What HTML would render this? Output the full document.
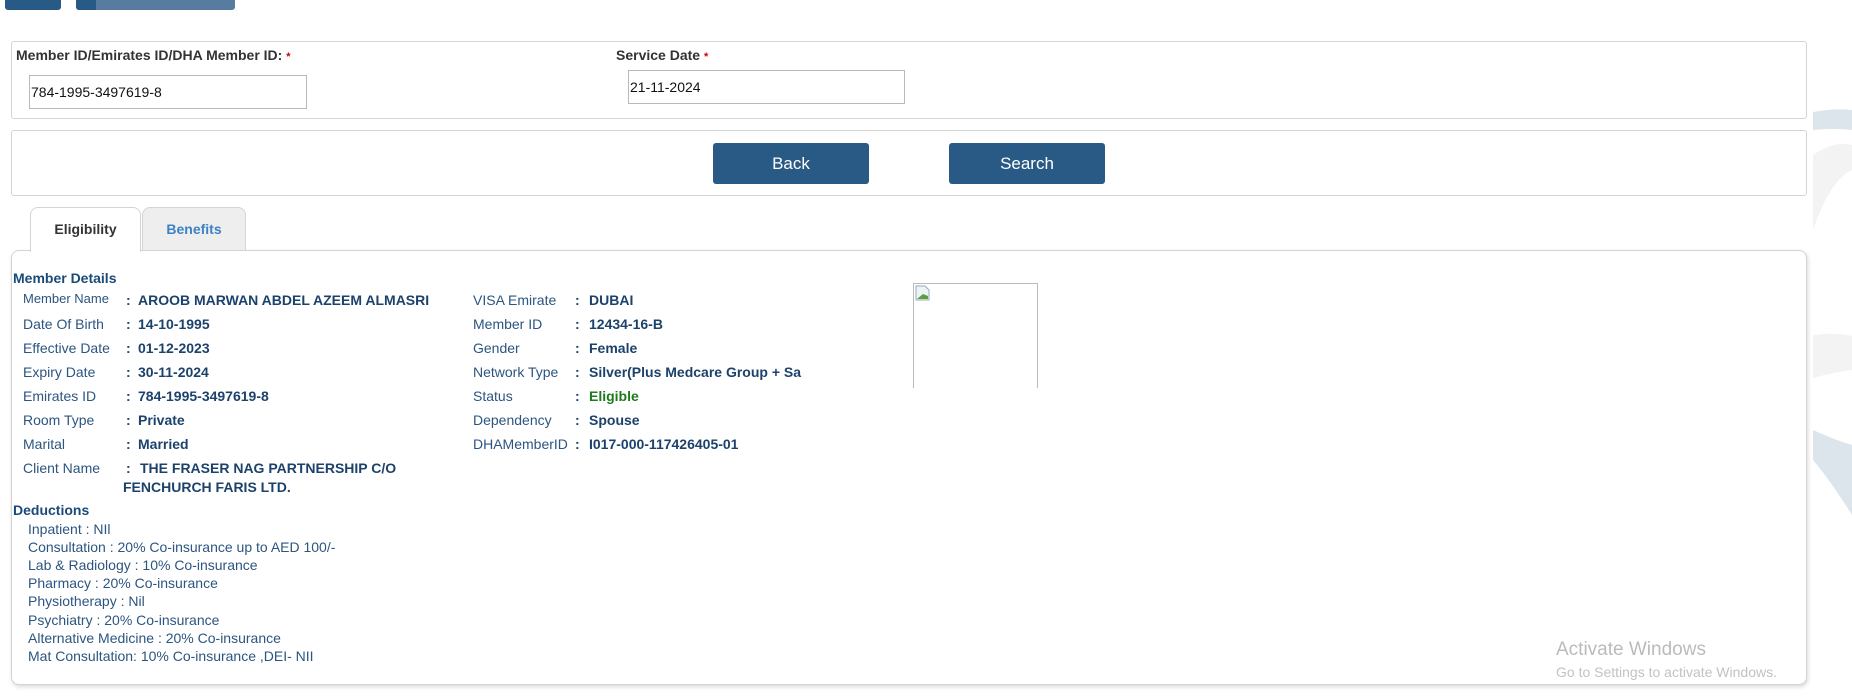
<!DOCTYPE html>
<html><head><meta charset="utf-8"><style>
*{margin:0;padding:0;box-sizing:border-box}
body{width:1852px;height:697px;background:#fff;position:relative;overflow:hidden;font-family:"Liberation Sans",Arial,sans-serif}
.a{position:absolute;white-space:nowrap;line-height:16px}
.panel{position:absolute;left:11px;width:1796px;border:1px solid #d4d4d4;border-radius:3px;background:#fff}
.lbl{font-size:14px;font-weight:bold;color:#333}
.req{color:#c00;font-size:11px}
.inp{position:absolute;border:1px solid #b9b9b9;font-size:14px;color:#111;line-height:32px;padding-left:1px;background:#fff}
.btn{position:absolute;background:#285a85;color:#fff;border-radius:3px;font-size:17px;text-align:center;line-height:41px;top:143px;height:41px;width:156px}
.l{font-size:14px;color:#2c5580}
.c{font-size:14px;color:#1c426b;font-weight:bold}
.v{font-size:14px;color:#1c426b;font-weight:bold}
.d{font-size:14px;color:#2c5580}
</style></head><body>
<div style="position:absolute;left:5px;top:-4px;width:56px;height:14px;background:#285a85;border-radius:3px"></div>
<div style="position:absolute;left:76px;top:-4px;width:159px;height:14px;background:#587c9f;border-radius:3px;overflow:hidden"><div style="width:20px;height:14px;background:#285a85"></div></div>

<svg style="position:absolute;left:1800px;top:100px" width="52" height="420" viewBox="0 0 52 420">
<path d="M13 12 Q35 8 52 10 L52 30 Q35 28 13 30 Z" fill="#dde5ec"/>
<path d="M13 55 Q35 40 52 45 L52 70 Q30 80 13 130 Z" fill="#f3f3f3"/>
<path d="M13 235 Q35 232 52 236 L52 270 Q35 272 13 278 Z" fill="#f3f3f3"/>
<path d="M13 330 Q35 340 52 345 L52 415 Q30 380 13 360 Z" fill="#dde5ec"/>
</svg>

<div class="panel" style="top:41px;height:78px"></div>
<div class="a lbl" style="left:16px;top:47px">Member ID/Emirates ID/DHA Member ID: <span class="req">*</span></div>
<div class="inp" style="left:29px;top:75px;width:278px;height:34px">784-1995-3497619-8</div>
<div class="a lbl" style="left:616px;top:47px">Service Date <span class="req">*</span></div>
<div class="inp" style="left:628px;top:70px;width:277px;height:34px">21-11-2024</div>

<div class="panel" style="top:130px;height:66px"></div>
<div class="btn" style="left:713px">Back</div>
<div class="btn" style="left:949px">Search</div>

<div class="panel" style="top:250px;height:435px;border-radius:8px;box-shadow:1px 2px 4px rgba(0,0,0,0.15)"></div>
<div style="position:absolute;left:30px;top:207px;width:111px;height:45px;background:#fff;border:1px solid #d4d4d4;border-bottom:none;border-radius:8px 8px 0 0"></div>
<div style="position:absolute;left:142px;top:207px;width:104px;height:43px;background:#eee;border:1px solid #d4d4d4;border-bottom:none;border-radius:8px 8px 0 0"></div>
<div class="a" style="left:30px;width:111px;text-align:center;top:221px;font-size:14px;font-weight:bold;color:#333">Eligibility</div>
<div class="a" style="left:142px;width:104px;text-align:center;top:221px;font-size:14px;font-weight:bold;color:#3d82c4">Benefits</div>

<div class="a" style="left:13px;top:270px;font-size:14px;font-weight:bold;color:#1a4a78">Member Details</div>

<div class="a l" style="left:23px;top:291px;font-size:13px">Member Name</div><div class="a c" style="left:126px;top:292px">:</div><div class="a v" style="left:138px;top:292px">AROOB MARWAN ABDEL AZEEM ALMASRI</div>
<div class="a l" style="left:23px;top:316px">Date Of Birth</div><div class="a c" style="left:126px;top:316px">:</div><div class="a v" style="left:138px;top:316px">14-10-1995</div>
<div class="a l" style="left:23px;top:340px">Effective Date</div><div class="a c" style="left:126px;top:340px">:</div><div class="a v" style="left:138px;top:340px">01-12-2023</div>
<div class="a l" style="left:23px;top:364px">Expiry Date</div><div class="a c" style="left:126px;top:364px">:</div><div class="a v" style="left:138px;top:364px">30-11-2024</div>
<div class="a l" style="left:23px;top:388px">Emirates ID</div><div class="a c" style="left:126px;top:388px">:</div><div class="a v" style="left:138px;top:388px">784-1995-3497619-8</div>
<div class="a l" style="left:23px;top:412px">Room Type</div><div class="a c" style="left:126px;top:412px">:</div><div class="a v" style="left:138px;top:412px">Private</div>
<div class="a l" style="left:23px;top:436px">Marital</div><div class="a c" style="left:126px;top:436px">:</div><div class="a v" style="left:138px;top:436px">Married</div>
<div class="a l" style="left:23px;top:460px">Client Name</div><div class="a c" style="left:126px;top:460px">:</div><div class="a v" style="left:140px;top:460px">THE FRASER NAG PARTNERSHIP C/O</div>
<div class="a v" style="left:123px;top:479px">FENCHURCH FARIS LTD.</div>

<div class="a l" style="left:473px;top:292px">VISA Emirate</div><div class="a c" style="left:575px;top:292px">:</div><div class="a v" style="left:589px;top:292px">DUBAI</div>
<div class="a l" style="left:473px;top:316px">Member ID</div><div class="a c" style="left:575px;top:316px">:</div><div class="a v" style="left:589px;top:316px">12434-16-B</div>
<div class="a l" style="left:473px;top:340px">Gender</div><div class="a c" style="left:575px;top:340px">:</div><div class="a v" style="left:589px;top:340px">Female</div>
<div class="a l" style="left:473px;top:364px">Network Type</div><div class="a c" style="left:575px;top:364px">:</div><div class="a v" style="left:589px;top:364px">Silver(Plus Medcare Group + Sa</div>
<div class="a l" style="left:473px;top:388px">Status</div><div class="a c" style="left:575px;top:388px">:</div><div class="a v" style="left:589px;top:388px;color:#1f7a1f">Eligible</div>
<div class="a l" style="left:473px;top:412px">Dependency</div><div class="a c" style="left:575px;top:412px">:</div><div class="a v" style="left:589px;top:412px">Spouse</div>
<div class="a l" style="left:473px;top:436px">DHAMemberID</div><div class="a c" style="left:575px;top:436px">:</div><div class="a v" style="left:589px;top:436px">I017-000-117426405-01</div>

<div style="position:absolute;left:913px;top:283px;width:125px;height:105px;border:1px solid #bbb;border-bottom:none"></div>
<svg style="position:absolute;left:915px;top:285px" width="16" height="16"><path d="M1 1h9l4 4v10H1z" fill="#eef3f8" stroke="#9ab"/><path d="M2 14 L8 9 L13 11 L13 14Z" fill="#5aa040"/></svg>

<div class="a" style="left:13px;top:502px;font-size:14px;font-weight:bold;color:#1a4a78">Deductions</div>
<div class="a d" style="left:28px;top:521px">Inpatient : NIl</div>
<div class="a d" style="left:28px;top:539px">Consultation : 20% Co-insurance up to AED 100/-</div>
<div class="a d" style="left:28px;top:557px">Lab &amp; Radiology : 10% Co-insurance</div>
<div class="a d" style="left:28px;top:575px">Pharmacy : 20% Co-insurance</div>
<div class="a d" style="left:28px;top:593px">Physiotherapy : Nil</div>
<div class="a d" style="left:28px;top:612px">Psychiatry : 20% Co-insurance</div>
<div class="a d" style="left:28px;top:630px">Alternative Medicine : 20% Co-insurance</div>
<div class="a d" style="left:28px;top:648px">Mat Consultation: 10% Co-insurance ,DEI- NII</div>

<div class="a" style="left:1556px;top:639px;font-size:19px;line-height:22px;color:#bbb">Activate Windows</div>
<div class="a" style="left:1556px;top:664px;font-size:14px;color:#c2c2c2">Go to Settings to activate Windows.</div>
</body></html>
